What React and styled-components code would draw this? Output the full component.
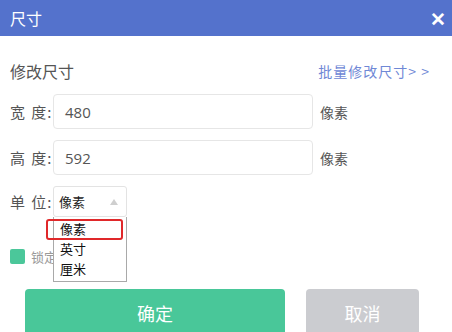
import React from "react";
import styled, { createGlobalStyle } from "styled-components";

const GlobalStyle = createGlobalStyle`
  html, body {
    margin: 0;
    padding: 0;
    background: #fff;
  }
  body {
    font-family: "Noto Sans CJK SC", "Noto Sans", sans-serif;
    overflow: hidden;
  }
`;

const Dialog = styled.div`
  width: 452px;
  height: 332px;
  background: #fff;
  overflow: hidden;
`;

const Header = styled.div`
  height: 36px;
  background: #5472cc;
  display: flex;
  align-items: center;
  justify-content: space-between;
  padding: 0 6px 0 10px;
  color: #fff;
  font-size: 16px;
`;

const Close = styled.span`
  font-size: 19px;
  font-weight: bold;
  line-height: 1;
  margin-top: -1px;
`;

const Body = styled.div`
  padding: 0 10px;
`;

const TopRow = styled.div`
  display: flex;
  justify-content: space-between;
  align-items: center;
  height: 30px;
  padding-top: 20px;
`;

const Heading = styled.div`
  font-size: 16px;
  color: #555;
`;

const BatchLink = styled.a`
  font-size: 14px;
  color: #6f88d6;
  text-decoration: none;
  margin-right: 12px;
  letter-spacing: 1px;
`;

const Row = styled.div`
  display: flex;
  align-items: center;
  margin-top: ${({ $gap }) => $gap}px;
  position: relative;
`;

const Label = styled.div`
  width: 43px;
  font-size: 15px;
  color: #555;
  letter-spacing: 1px;
  word-spacing: 1px;
`;

const Input = styled.div`
  width: 247px;
  height: 33px;
  border: 1px solid #e6e6e6;
  border-radius: 4px;
  display: flex;
  align-items: center;
  padding-left: 11px;
  box-sizing: content-box;
  font-family: "Open Sans", "Noto Sans", sans-serif;
  font-size: 15px;
  color: #555;
`;

const Unit = styled.div`
  margin-left: 7px;
  font-size: 14px;
  color: #555;
`;

const Select = styled.div`
  width: 74px;
  height: 31px;
  border: 1px solid #e3e3e3;
  border-radius: 3px;
  display: flex;
  align-items: center;
  justify-content: space-between;
  padding: 0 6px 0 5px;
  box-sizing: border-box;
  font-size: 13px;
  color: #222;
`;

const Arrow = styled.span`
  width: 0;
  height: 0;
  border-left: 4px solid transparent;
  border-right: 4px solid transparent;
  border-bottom: 6px solid #cfcfcf;
  margin-right: 2px;
`;

const Options = styled.div`
  position: absolute;
  left: 43px;
  top: 31px;
  width: 74px;
  height: 65px;
  box-sizing: border-box;
  border: 1px solid #a9a9a9;
  border-top: none;
  background: #fff;
  padding-top: 2px;
  z-index: 2;
`;

const Option = styled.div`
  height: 20px;
  line-height: 20px;
  padding-left: 6px;
  font-size: 13px;
  color: #111;
`;

const Highlight = styled.div`
  position: absolute;
  left: -8px;
  top: 2px;
  width: 77px;
  height: 21px;
  box-sizing: border-box;
  border: 2px solid #e0282a;
  border-radius: 3px;
`;

const CheckRow = styled.div`
  display: flex;
  align-items: center;
  margin-top: 30px;
  gap: 6px;
`;

const Box = styled.span`
  width: 15px;
  height: 15px;
  border-radius: 2px;
  background: #4bc79a;
`;

const CheckText = styled.span`
  font-size: 13px;
  color: #999;
`;

const Buttons = styled.div`
  display: flex;
  gap: 21px;
  margin-top: 23px;
  padding-left: 15px;
`;

const Button = styled.div`
  width: ${({ $w }) => $w}px;
  height: 48px;
  border-radius: 4px;
  background: ${({ $primary }) => ($primary ? "#49c799" : "#cbccd0")};
  color: #fff;
  display: flex;
  align-items: center;
  justify-content: center;
  font-size: 18px;
`;

export default function App() {
  return (
    <Dialog>
      <GlobalStyle />
      <Header>
        <span>尺寸</span>
        <Close>✕</Close>
      </Header>
      <Body>
        <TopRow>
          <Heading>修改尺寸</Heading>
          <BatchLink href="#">批量修改尺寸&gt; &gt;</BatchLink>
        </TopRow>
        <Row $gap={8}>
          <Label>宽 度:</Label>
          <Input>480</Input>
          <Unit>像素</Unit>
        </Row>
        <Row $gap={11}>
          <Label>高 度:</Label>
          <Input>592</Input>
          <Unit>像素</Unit>
        </Row>
        <Row $gap={11}>
          <Label>单 位:</Label>
          <Select>
            <span>像素</span>
            <Arrow />
          </Select>
          <Options>
            <Highlight />
            <Option>像素</Option>
            <Option>英寸</Option>
            <Option>厘米</Option>
          </Options>
        </Row>
        <CheckRow>
          <Box />
          <CheckText>锁定比例</CheckText>
        </CheckRow>
        <Buttons>
          <Button $primary $w={260}>确定</Button>
          <Button $w={113}>取消</Button>
        </Buttons>
      </Body>
    </Dialog>
  );
}
